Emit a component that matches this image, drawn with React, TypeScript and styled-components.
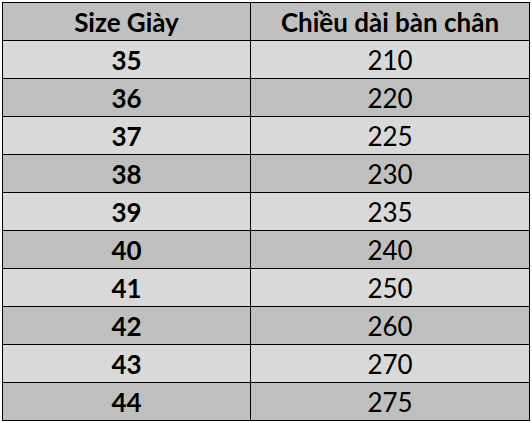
import * as React from 'react';
import styled, { createGlobalStyle } from 'styled-components';

const rows: [string, string][] = [
    ['35', '210'],
    ['36', '220'],
    ['37', '225'],
    ['38', '230'],
    ['39', '235'],
    ['40', '240'],
    ['41', '250'],
    ['42', '260'],
    ['43', '270'],
    ['44', '275'],
];

const GlobalStyle = createGlobalStyle`
    body {
        margin: 0;
        background: #ffffff;
        font-family: Lato, "Open Sans", sans-serif;
    }
`;

const Wrap = styled.div`
    padding: 2px;
`;

const Table = styled.table`
    border-collapse: collapse;
    width: 527px;
    table-layout: fixed;
    color: #000;
`;

const HeadCell = styled.th`
    height: 37px;
    padding: 0;
    border: 1px solid #000;
    background: #c0c0c0;
    font-size: 26px;
    line-height: 1;
    font-weight: 700;
    text-align: center;
`;

const Row = styled.tr<{ $shade: boolean }>`
    background: ${(p) => (p.$shade ? '#bfbfbf' : '#d9d9d9')};
`;

const Cell = styled.td<{ $bold?: boolean }>`
    height: 37px;
    padding: 0;
    border: 1px solid #000;
    font-size: 26px;
    line-height: 1;
    font-weight: ${(p) => (p.$bold ? 700 : 400)};
    text-align: center;
`;

const App: React.FC = () => {
    return (
        <Wrap>
            <GlobalStyle />
            <Table>
                <colgroup>
                    <col style={{ width: 248 }} />
                    <col style={{ width: 279 }} />
                </colgroup>
                <thead>
                    <tr>
                        <HeadCell>Size Giày</HeadCell>
                        <HeadCell>Chiều dài bàn chân</HeadCell>
                    </tr>
                </thead>
                <tbody>
                    {rows.map(([size, len], i) => (
                        <Row key={size} $shade={i % 2 === 1}>
                            <Cell $bold>{size}</Cell>
                            <Cell>{len}</Cell>
                        </Row>
                    ))}
                </tbody>
            </Table>
        </Wrap>
    );
};

export default App;
